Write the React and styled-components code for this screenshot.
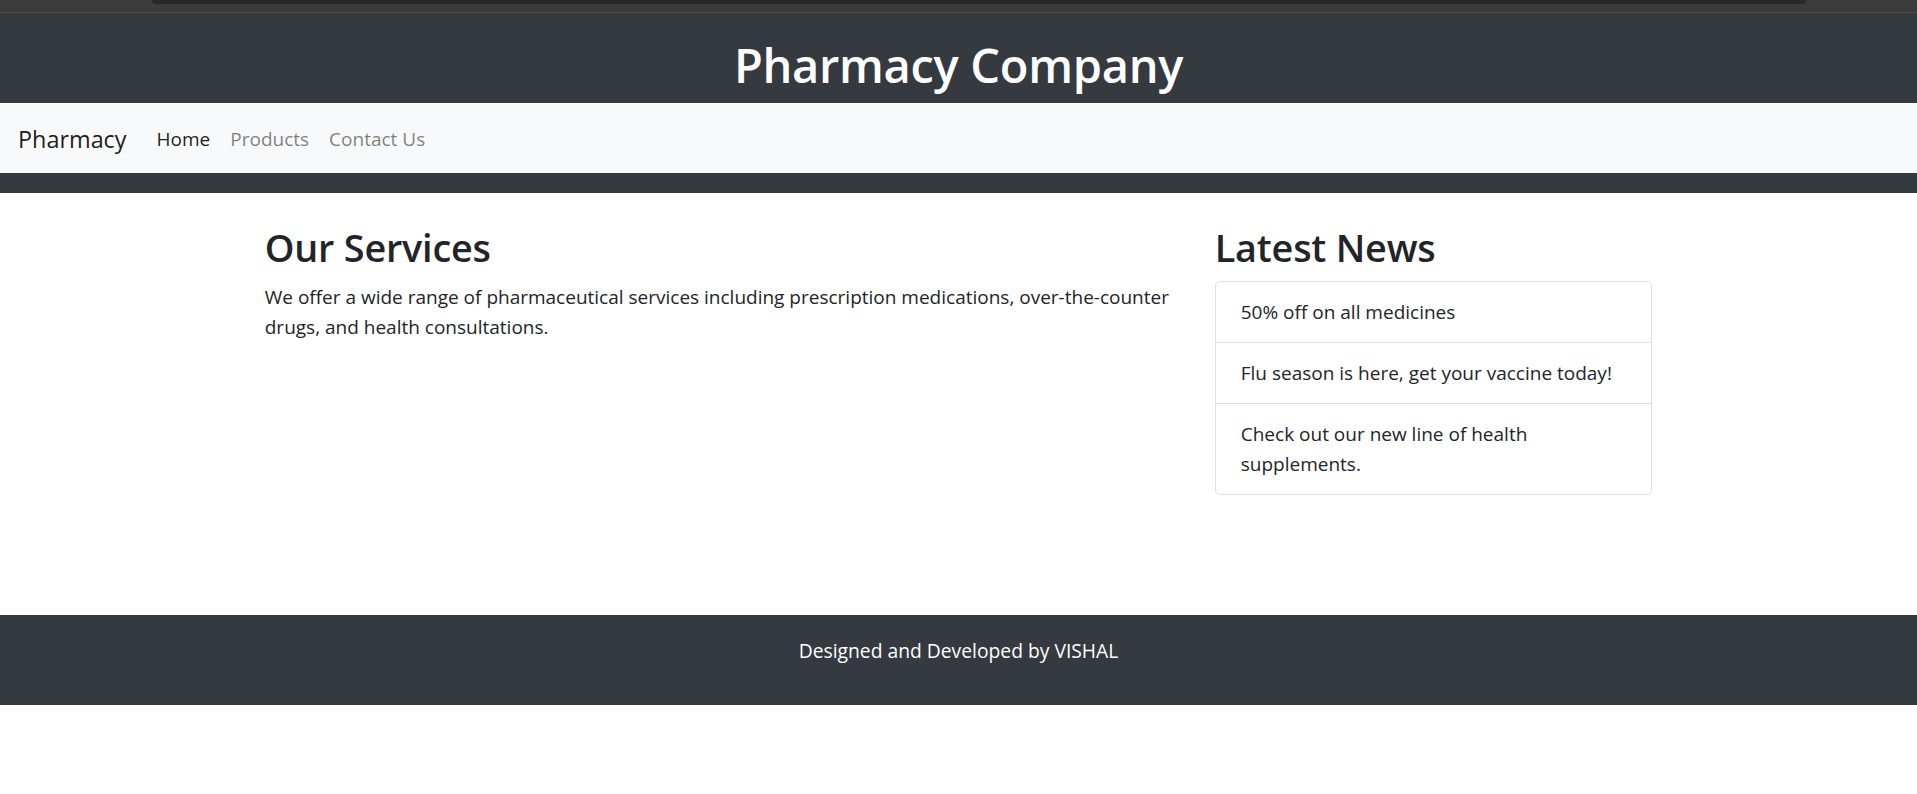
import React from "react";
import styled, { createGlobalStyle } from "styled-components";

const GlobalStyle = createGlobalStyle`
  * { box-sizing: border-box; }
  html, body { margin: 0; padding: 0; background: #ffffff; }
  body {
    font-family: "Open Sans", "Noto Sans", Arial, sans-serif;
    font-size: 19px;
    line-height: 30px;
    color: #212529;
  }
`;

const TopStrip = styled.div`
  height: 13px;
  background: #3c3c3c;
  border-bottom: 1px solid #4a4c48;
`;

const StripBar = styled.div`
  height: 4px;
  margin: 0 111px 0 152px;
  background: #282828;
  border-radius: 0 0 7px 7px;
`;

const Header = styled.header`
  background: #343a40;
  padding: 22px 0 20px;
`;

const Title = styled.h1`
  margin: 0 0 8px;
  text-align: center;
  color: #ffffff;
  font-size: 47px;
  line-height: 60px;
  font-weight: 600;
  letter-spacing: -0.3px;
`;

const Navbar = styled.nav`
  display: flex;
  align-items: center;
  background: #f8f9fa;
  padding: 10px 20px 10px 18px;
`;

const Brand = styled.a`
  font-size: 23.4px;
  line-height: 37.5px;
  padding: 7.5px 0 5px;
  margin-right: 20px;
  color: rgba(0, 0, 0, 0.9);
  text-decoration: none;
`;

const NavList = styled.ul`
  display: flex;
  list-style: none;
  margin: 0;
  padding: 0;
`;

const NavLink = styled.a`
  display: block;
  padding: 11px 10px 9px;
  font-size: 19px;
  line-height: 30px;
  text-decoration: none;
  color: ${(p) => (p.$active ? "rgba(0, 0, 0, 0.9)" : "rgba(0, 0, 0, 0.5)")};
`;

const Main = styled.main`
  width: 1425px;
  margin: 30px auto 0;
  padding: 0 18.75px;
`;

const Row = styled.div`
  display: flex;
  margin: 0 -18.75px;
`;

const Col = styled.section`
  flex: 0 0 ${(p) => p.$span}%;
  max-width: ${(p) => p.$span}%;
  padding: 0 18.75px;
`;

const Heading = styled.h2`
  margin: 0 0 10px;
  font-size: 37.8px;
  line-height: 48px;
  font-weight: 600;
  letter-spacing: -0.2px;
  padding-top: 1px;
  height: 48px;
`;

const Text = styled.p`
  margin: 0 0 20px;
  padding-top: 1px;
`;

const NewsList = styled.ul`
  list-style: none;
  margin: 0;
  padding: 0;
  border: 1px solid rgba(0, 0, 0, 0.125);
  border-radius: 5px;
`;

const NewsItem = styled.li`
  padding: 15px 25px;
  & + & {
    border-top: 1px solid rgba(0, 0, 0, 0.125);
  }
`;

const Footer = styled.footer`
  margin-top: 120px;
  background: #343a40;
  color: #ffffff;
  text-align: center;
  padding: 21px 0 19px;
  font-size: 19.3px;
`;

const FooterText = styled.p`
  margin: 0 0 20px;
`;

export default function App() {
  const news = [
    "50% off on all medicines",
    "Flu season is here, get your vaccine today!",
    "Check out our new line of health supplements.",
  ];
  return (
    <>
      <GlobalStyle />
      <TopStrip>
        <StripBar />
      </TopStrip>
      <Header>
        <Title>Pharmacy Company</Title>
        <Navbar>
          <Brand href="#">Pharmacy</Brand>
          <NavList>
            <li><NavLink href="#" $active>Home</NavLink></li>
            <li><NavLink href="#">Products</NavLink></li>
            <li><NavLink href="#">Contact Us</NavLink></li>
          </NavList>
        </Navbar>
      </Header>
      <Main>
        <Row>
          <Col $span={66.6667}>
            <Heading>Our Services</Heading>
            <Text>
              We offer a wide range of pharmaceutical services including prescription medications, over-the-counter drugs, and health consultations.
            </Text>
          </Col>
          <Col $span={33.3333}>
            <Heading>Latest News</Heading>
            <NewsList>
              {news.map((n) => (
                <NewsItem key={n}>{n}</NewsItem>
              ))}
            </NewsList>
          </Col>
        </Row>
      </Main>
      <Footer>
        <FooterText>Designed and Developed by VISHAL</FooterText>
      </Footer>
    </>
  );
}
